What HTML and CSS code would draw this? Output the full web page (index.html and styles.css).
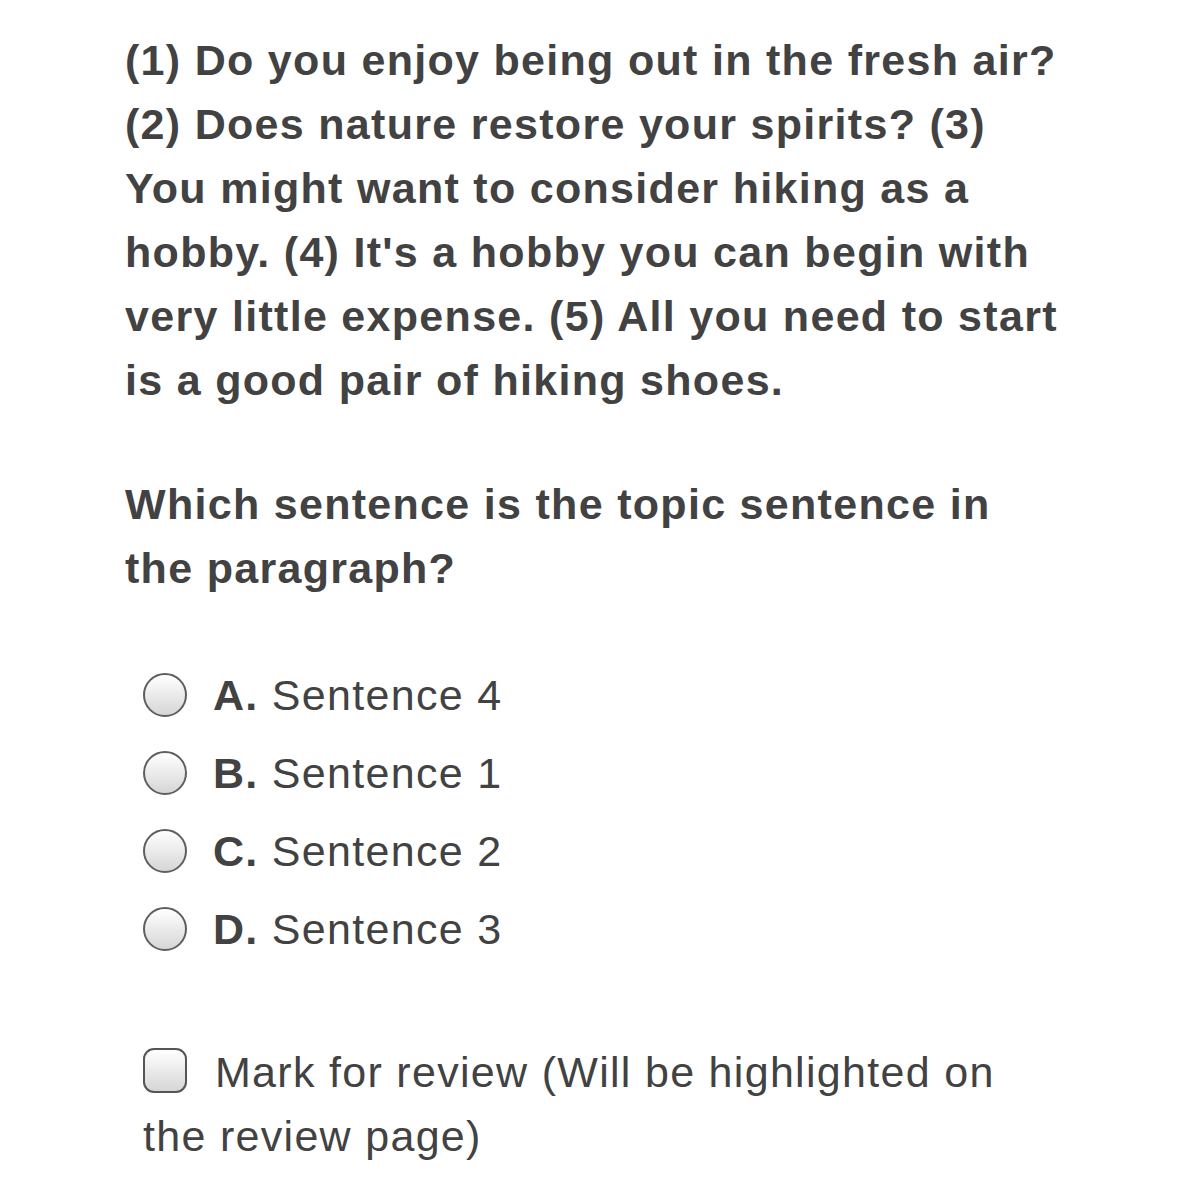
FILE: index.html
```html
<!DOCTYPE html>
<html>
<head>
<meta charset="utf-8">
<link rel="stylesheet" href="styles.css">
</head>
<body>
<div class="page">
  <p class="passage">(1) Do you enjoy being out in the fresh air? (2) Does nature restore your spirits? (3) You might want to consider hiking as a hobby. (4) It's a hobby you can begin with very little expense. (5) All you need to start is a good pair of hiking shoes.</p>
  <p class="question">Which sentence is the topic sentence in the paragraph?</p>
  <ul class="options">
    <li class="option"><span class="radio"></span><span class="label"><b>A.</b> Sentence 4</span></li>
    <li class="option"><span class="radio"></span><span class="label"><b>B.</b> Sentence 1</span></li>
    <li class="option"><span class="radio"></span><span class="label"><b>C.</b> Sentence 2</span></li>
    <li class="option"><span class="radio"></span><span class="label"><b>D.</b> Sentence 3</span></li>
  </ul>
  <p class="review"><span class="check"></span>Mark for review (Will be highlighted on the review page)</p>
</div>
</body>
</html>
```
FILE: styles.css
```css
html, body {
  margin: 0;
  padding: 0;
  background: #ffffff;
}
body {
  font-family: "Liberation Sans", Arial, sans-serif;
  color: #424242;
  letter-spacing: 1.3px;
}
.page {
  padding: 28px 0 0 125px;
  width: 945px;
}
.passage, .question {
  margin: 0;
  font-weight: bold;
  font-size: 43px;
  line-height: 64px;
}
.question {
  margin-top: 60px;
  width: 900px;
}
.options {
  list-style: none;
  margin: 56px 0 0 18px;
  padding: 0;
}
.option {
  display: flex;
  align-items: center;
  height: 78px;
  font-size: 43px;
}
.option b {
  font-weight: bold;
}
.radio {
  width: 40px;
  height: 40px;
  border: 2px solid #5e5e5e;
  border-radius: 50%;
  background: linear-gradient(#ffffff, #d6d6d6);
  margin-right: 26px;
  flex: none;
}
.review {
  margin: 72px 0 0 18px;
  font-size: 43px;
  line-height: 64px;
  width: 880px;
}
.check {
  display: inline-block;
  vertical-align: -6px;
  width: 44px;
  height: 45px;
  box-sizing: border-box;
  border: 2.5px solid #555555;
  border-radius: 11px;
  background: linear-gradient(#ffffff, #d6d6d6);
  margin-right: 28px;
}
```
